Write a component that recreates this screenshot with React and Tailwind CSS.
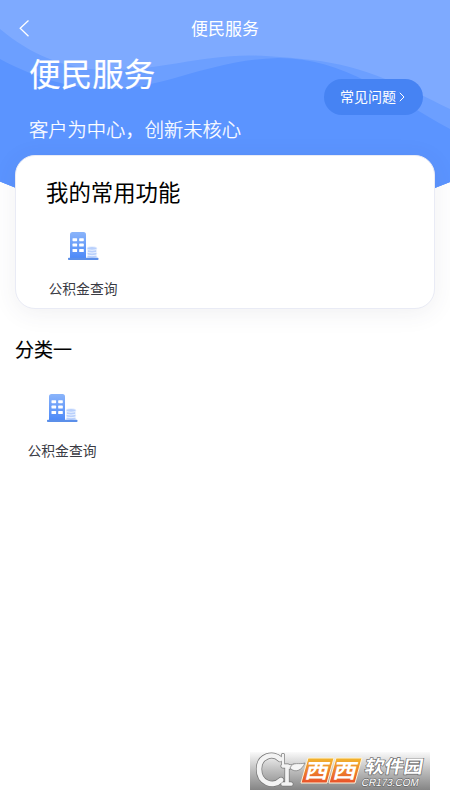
const commonList = [{ id: 1, name: "公积金查询" }];
const categoryList = [{ id: 1, name: "公积金查询" }];

function BuildingIcon({ id }) {
  return (
    <svg width="32" height="30" viewBox="0 0 32 30">
      <defs>
        <linearGradient id={id} x1="0" y1="0" x2="0" y2="1">
          <stop offset="0" stopColor="#8ab4fa" />
          <stop offset="1" stopColor="#4b88f8" />
        </linearGradient>
      </defs>
      <path
        d="M3 28V3.500Q3 1 5.500 1H16.500Q19 1 19 3.500V28Z"
        fill={`url(#${id})`}
      />
      {[7.2, 12.6, 18].map((y) => (
        <g key={y} fill="#fff">
          <rect x="5.500" y={y} width="4.600" height="3" rx="0.600" />
          <rect x="12.200" y={y} width="4.600" height="3" rx="0.600" />
        </g>
      ))}
      {/* coins */}
      <g fill="#b9d0fc" stroke="#f1f6ff" strokeWidth="0.900">
        <ellipse cx="25" cy="25.400" rx="5" ry="2" />
        <ellipse cx="25" cy="22.700" rx="5" ry="2" />
        <ellipse cx="25" cy="20" rx="5" ry="2" />
        <ellipse cx="25" cy="17.400" rx="5" ry="1.900" />
      </g>
      <rect x="1" y="26.800" width="30.500" height="2.200" rx="0.800" fill="#5b8fe9" />
    </svg>
  );
}

function ServiceItem({ id, name }) {
  return (
    <div className="flex w-[72px] flex-col items-center">
      <BuildingIcon id={id} />
      <p className="mt-[17px] text-[13.8px] leading-5 whitespace-nowrap text-[#3a3b44]">
        {name}
      </p>
    </div>
  );
}

function Waves() {
  return (
    <svg
      className="absolute top-0 left-0"
      width="450"
      height="194"
      viewBox="0 0 450 194"
    >
      <defs>
        <clipPath id="headerClip">
          <path d="M0 0H450V182L436 187.500Q225 250 15 187.500L0 181.500Z" />
        </clipPath>
      </defs>
      <g clipPath="url(#headerClip)">
        <rect width="450" height="194" fill="#7eaaff" />
        <path
          d="M0 29C30 54 64 69 105 70C158 71 196 56 250 55.500C273 56 290 58 312 60C365 66 405 87 450 109V194H0Z"
          fill="#6c9fff"
        />
        <path
          d="M0 59C32 76 66 89 112 89C166 88 210 60 278 58C345 58 391 97 450 129V194H0Z"
          fill="#5b94ff"
        />
      </g>
    </svg>
  );
}

function Watermark() {
  return (
    <svg width="180" height="38" viewBox="0 0 180 38">
      <defs>
        <linearGradient id="wmBg" x1="0" y1="0" x2="0" y2="1">
          <stop offset="0" stopColor="#fafafa" />
          <stop offset="0.500" stopColor="#bcbcbc" />
          <stop offset="1" stopColor="#858585" />
        </linearGradient>
        <linearGradient id="wmOrange" x1="0" y1="0" x2="0" y2="1">
          <stop offset="0" stopColor="#f2b62e" />
          <stop offset="1" stopColor="#e8502a" />
        </linearGradient>
      </defs>
      <rect width="180" height="38" fill="url(#wmBg)" />
      {/* C and the leaf shaped r */}
      <g fill="none" strokeLinecap="round" strokeLinejoin="round">
        <g stroke="#777">
          <path d="M30 7C23 0 9 4 9 17C9 31 23 36 31 28" strokeWidth="6.200" />
          <path d="M33 3V12" strokeWidth="4" />
          <path d="M37 14V31M33 32H41M33 14H38Q40 16 44 14" strokeWidth="5" />
        </g>
        <g stroke="#f3f3f3">
          <path d="M30 7C23 0 9 4 9 17C9 31 23 36 31 28" strokeWidth="4.800" />
          <path d="M33 3V12" strokeWidth="2.600" />
          <path d="M37 14V31M33 32H41M33 14H38Q40 16 44 14" strokeWidth="3.700" />
        </g>
      </g>
      <path
        d="M40 16C43 9 49 13 55 11C52 18 46 21 41 17Z"
        fill="#f5f5f5"
        stroke="#777"
        strokeWidth="0.700"
      />
      <path d="M58 6H84L77 31H51Z" fill="url(#wmOrange)" stroke="#fff3d8" />
      <path d="M86 6H112L105 31H79Z" fill="url(#wmOrange)" stroke="#fff3d8" />
      <g
        className="font-['Noto_Sans_CJK_SC',sans-serif] font-bold"
        fill="#fff"
        fontSize="20"
      >
        <text transform="translate(54 26) skewX(-14) scale(1.180 1)">西</text>
        <text transform="translate(82 26) skewX(-14) scale(1.180 1)">西</text>
      </g>
      <g
        fill="#fff"
        stroke="#666"
        strokeWidth="1.200"
        style={{ paintOrder: "stroke" }}
      >
        <text
          transform="translate(114 21) skewX(-10) scale(1.080 1)"
          fontSize="18"
          className="font-['Noto_Sans_CJK_SC',sans-serif] font-bold"
        >
          软件园
        </text>
        <text
          transform="translate(111 34) skewX(-12)"
          fontSize="10.500"
          textLength="57"
          lengthAdjust="spacingAndGlyphs"
          className="font-['Liberation_Sans',sans-serif] font-normal"
        >
          CR173.COM
        </text>
      </g>
    </svg>
  );
}

export default function App() {
  return (
    <div className="relative flex h-[800px] w-[450px] flex-col overflow-hidden bg-white font-['Noto_Sans_CJK_SC',sans-serif]">
      <Waves />

      {/* Header */}
      <header className="relative h-[155px] text-white">
        <div className="flex h-[54px] items-center justify-center pt-0.5">
          <svg
            className="absolute top-5 left-[19px]"
            width="11"
            height="17"
            fill="none"
            stroke="currentColor"
            strokeWidth="1.300"
          >
            <path d="M9.500 0.500L1.200 8.300L9.500 16.200" />
          </svg>
          <h1 className="text-[17px] leading-6">便民服务</h1>
        </div>
        <div className="flex items-start justify-between pr-[27px] pl-[29px]">
          <div>
            <h2 className="text-[31.6px] leading-9 [-webkit-text-stroke:0.2px_white]">
              便民服务
            </h2>
            <p className="mt-[25px] text-[19.3px] leading-7 font-light whitespace-nowrap [-webkit-text-stroke:0.25px_white]">
              客户为中心，创新未核心
            </p>
          </div>
          <button className="mt-[25px] flex h-9 w-[99px] items-center justify-center gap-[3px] rounded-full bg-[#4683f3] pr-0.5 pb-0.5 text-sm">
            常见问题
            <svg
              className="mt-0.5"
              width="6"
              height="10"
              fill="none"
              stroke="currentColor"
            >
              <path d="M0.800 0.800L5 5L0.800 9.200" />
            </svg>
          </button>
        </div>
      </header>

      {/* Common functions */}
      <section className="relative mx-[15px] h-[154px] rounded-[20px] border border-[#e9ebf5] bg-white pt-[19px] pl-[30px] shadow-[0_4px_24px_rgba(60,65,90,0.08)]">
        <h3 className="text-[22.4px] leading-8 text-black">我的常用功能</h3>
        <div className="mt-6 ml-px flex">
          {commonList.map((item) => (
            <ServiceItem key={item.id} id={`common${item.id}`} name={item.name} />
          ))}
        </div>
      </section>

      {/* Category */}
      <section className="relative px-[15px] pt-[26px]">
        <h3 className="text-[19px] leading-7 text-black [-webkit-text-stroke:0.15px_black]">
          分类一
        </h3>
        <div className="mt-[30px] ml-[11px] flex">
          {categoryList.map((item) => (
            <ServiceItem
              key={item.id}
              id={`category${item.id}`}
              name={item.name}
            />
          ))}
        </div>
      </section>

      <div className="mt-auto mb-[10px] ml-[250px] h-[38px]">
        <Watermark />
      </div>
    </div>
  );
}
